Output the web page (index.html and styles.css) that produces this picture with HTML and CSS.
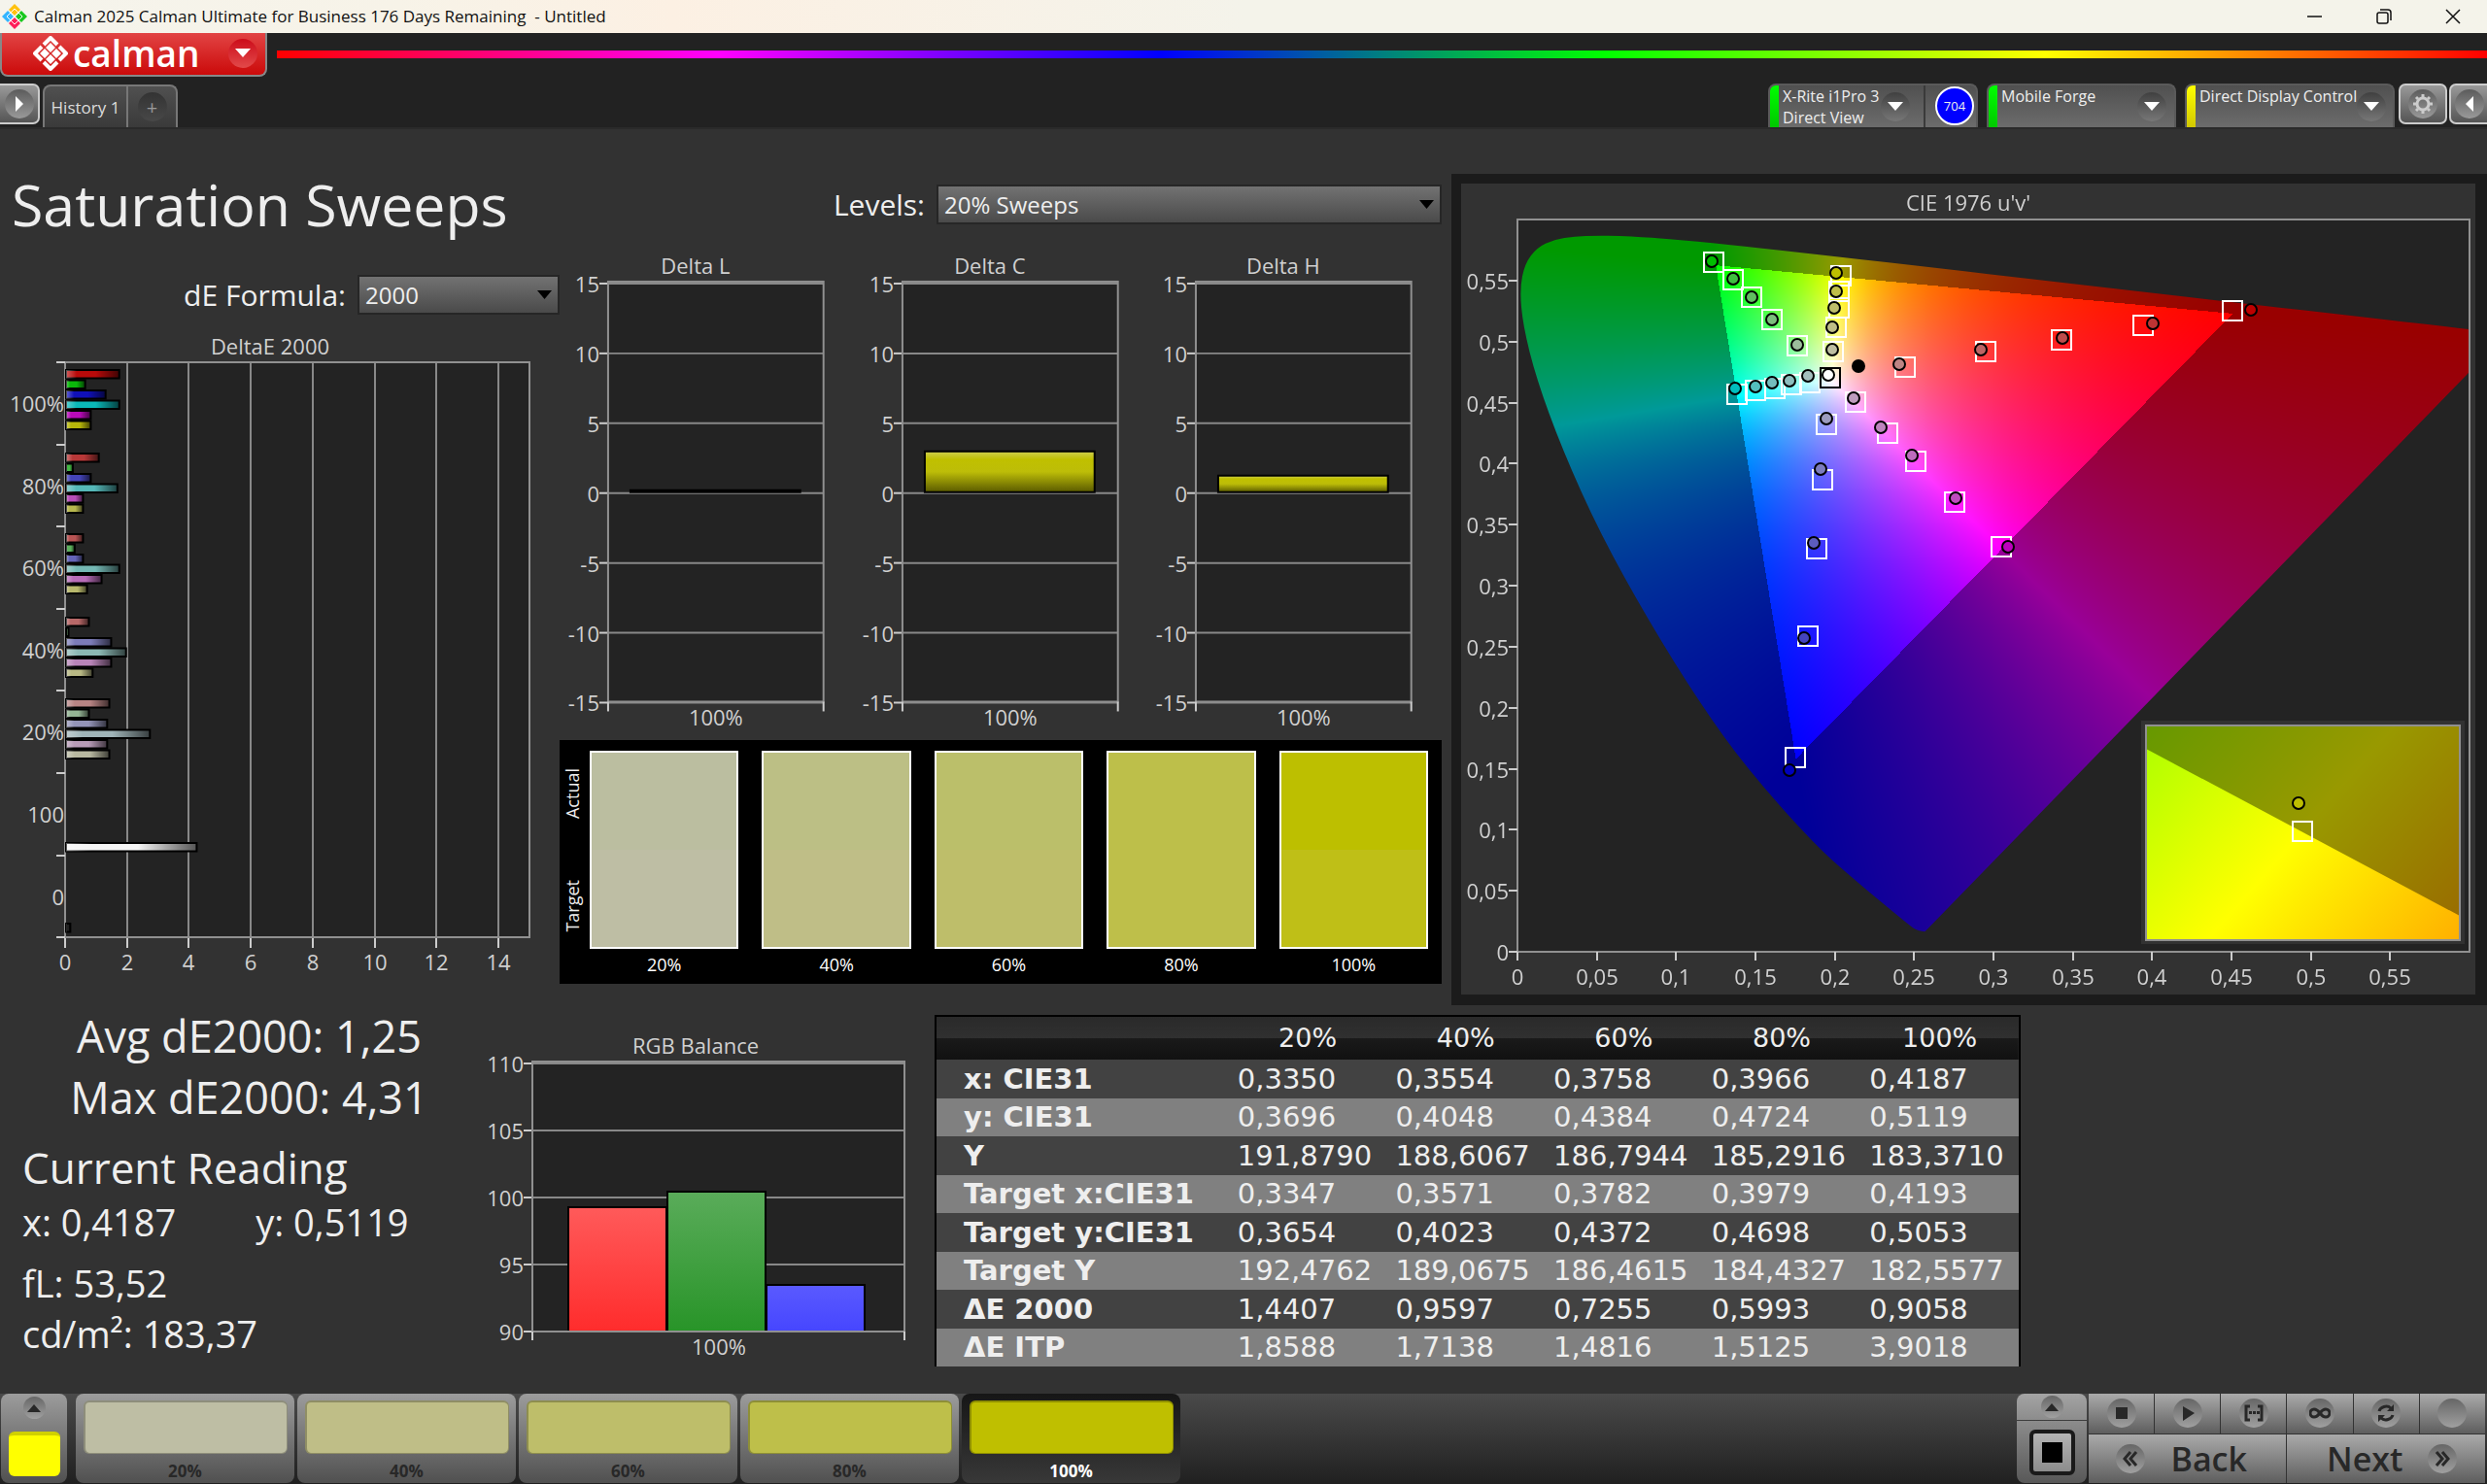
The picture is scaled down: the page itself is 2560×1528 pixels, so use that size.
FILE: index.html
```html
<!DOCTYPE html>
<html lang="en">
<head>
    <meta charset="utf-8">
    <title>Calman 2025</title>
    <meta name="viewport" content="width=device-width, initial-scale=1.0">
    <link rel="stylesheet" href="styles.css">
</head>
<body>
    <div class="titlebar">
        <svg class="app-icon" width="26" height="26" viewBox="0 0 26 26">
            <path fill="#ffc20e" d="M13 0l6 6-6 6-6-6z"/>
            <path fill="#33b5ff" d="M6 7l6 6-6 6-6-6z"/>
            <path fill="#19c81e" d="M20 7l6 6-6 6-6-6z"/>
            <path fill="#ff1f5a" d="M13 14l6 6-6 6-6-6z"/>
            <path fill="none" stroke="#fff" d="M13 5l4 4-4 4-4-4zM13 13l4 4-4 4-4-4zM9 9l4 4-4 4-4-4zM17 9l4 4-4 4-4-4z"/>
        </svg>
        <span class="app-title">Calman 2025 Calman Ultimate for Business 176 Days Remaining &nbsp;- Untitled</span>
        <div class="window-buttons">
            <button aria-label="Minimize"><svg width="16" height="16" viewBox="0 0 16 16"><path d="M0 8h15"/></svg></button>
            <button aria-label="Restore"><svg width="16" height="16" viewBox="0 0 16 16"><rect x="1" y="4" width="11" height="11" rx="2"/><path d="M4 1h8q3 0 3 3v8"/></svg></button>
            <button aria-label="Close"><svg width="16" height="16" viewBox="0 0 16 16"><path d="M1 1l14 14M15 1L1 15"/></svg></button>
        </div>
    </div>

    <header>
        <div class="brand-row">
            <button class="brand">
                <svg width="36" height="36" viewBox="0 0 36 36">
                    <g fill="none" stroke="#fff" stroke-width="4" stroke-linejoin="round">
                        <path d="M11 9l7-7 7 7M9 11l-7 7 7 7M27 11l7 7-7 7M11 27l7 7 7-7"/>
                    </g>
                    <path fill="#fff" d="M18 7l5 5-5 5-5-5zM12 13l5 5-5 5-5-5zM24 13l5 5-5 5-5-5zM18 19l5 5-5 5-5-5z"/>
                </svg>
                <span class="brand-name">calman</span>
                <span class="round red"><svg width="16" height="10" viewBox="0 0 16 10"><path d="M0 0h16l-8 9z"/></svg></span>
            </button>
            <div class="rainbow"></div>
        </div>
        <div class="tab-row">
            <button class="edge-button left" aria-label="Expand"><span class="round"><svg width="10" height="16" viewBox="0 0 10 16"><path d="M1 0l8 8-8 8z"/></svg></span></button>
            <div class="tabs">
                <button class="tab">History 1</button>
                <button class="tab-add" aria-label="Add tab"><span class="round dark">+</span></button>
            </div>
            <div class="devices">
                <div class="device meter green">
                    <span class="device-name">X-Rite i1Pro 3<br>Direct View</span>
                    <button class="round dark" aria-label="Meter options"><svg width="16" height="10" viewBox="0 0 16 10"><path d="M0 0h16l-8 9z"/></svg></button>
                    <span class="meter-count"><b>704</b></span>
                </div>
                <div class="device source green">
                    <span class="device-name">Mobile Forge</span>
                    <button class="round dark" aria-label="Source options"><svg width="16" height="10" viewBox="0 0 16 10"><path d="M0 0h16l-8 9z"/></svg></button>
                </div>
                <div class="device display yellow">
                    <span class="device-name">Direct Display Control</span>
                    <button class="round dark" aria-label="Display options"><svg width="16" height="10" viewBox="0 0 16 10"><path d="M0 0h16l-8 9z"/></svg></button>
                </div>
                <button class="edge-button gear" aria-label="Settings"><span class="round">
                    <svg width="22" height="22" viewBox="0 0 22 22">
                        <circle cx="11" cy="11" r="6" fill="none" stroke="#ccc" stroke-width="3"/>
                        <path fill="none" stroke="#ccc" stroke-width="3" d="M11 1v3M11 18v3M1 11h3M18 11h3M4 4l2 2M16 16l2 2M18 4l-2 2M6 16l-2 2"/>
                    </svg></span></button>
                <button class="edge-button right" aria-label="Collapse"><span class="round"><svg width="10" height="16" viewBox="0 0 10 16"><path d="M9 0L1 8l8 8z"/></svg></span></button>
            </div>
        </div>
    </header>

    <main>
        <div class="top">
            <section class="sweeps">
                <h1>Saturation Sweeps</h1>
                <div class="field">
                    <label for="formula">dE Formula:</label>
                    <span class="select"><select id="formula"><option>2000</option></select></span>
                </div>
                <svg id="deltae" class="chart" viewBox="0 0 576 686"></svg>
            </section>

            <section class="deltas">
                <div class="field">
                    <label for="levels">Levels:</label>
                    <span class="select wide"><select id="levels"><option>20% Sweeps</option></select></span>
                </div>
                <div class="delta-charts">
                    <svg id="delta-l" class="chart" viewBox="0 0 303 508"></svg>
                    <svg id="delta-c" class="chart" viewBox="0 0 303 508"></svg>
                    <svg id="delta-h" class="chart" viewBox="0 0 303 508"></svg>
                </div>
                <div class="compare">
                    <div class="compare-side"><span>Actual</span><span>Target</span></div>
                    <figure><div class="pair s20"></div><figcaption>20%</figcaption></figure>
                    <figure><div class="pair s40"></div><figcaption>40%</figcaption></figure>
                    <figure><div class="pair s60"></div><figcaption>60%</figcaption></figure>
                    <figure><div class="pair s80"></div><figcaption>80%</figcaption></figure>
                    <figure><div class="pair s100"></div><figcaption>100%</figcaption></figure>
                </div>
            </section>

            <section class="cie">
                <div class="cie-plot">
                    <canvas id="cie-colors" width="1044" height="835"></canvas>
                    <svg id="cie" class="chart" viewBox="0 0 1044 835"></svg>
                </div>
            </section>
        </div>

        <div class="bottom">
            <section class="stats">
                <p class="summary">Avg dE2000: 1,25</p>
                <p class="summary">Max dE2000: 4,31</p>
                <h2>Current Reading</h2>
                <p class="xy"><span>x: 0,4187</span><span>y: 0,5119</span></p>
                <p class="luminance">fL: 53,52</p>
                <p>cd/m²: 183,37</p>
            </section>
            <section class="balance">
                <svg id="rgb" class="chart" viewBox="0 0 460 345"></svg>
            </section>
            <table>
                <thead>
                    <tr><td></td><th>20%</th><th>40%</th><th>60%</th><th>80%</th><th>100%</th></tr>
                </thead>
                <tbody>
                    <tr><th>x: CIE31</th><td>0,3350</td><td>0,3554</td><td>0,3758</td><td>0,3966</td><td>0,4187</td></tr>
                    <tr><th>y: CIE31</th><td>0,3696</td><td>0,4048</td><td>0,4384</td><td>0,4724</td><td>0,5119</td></tr>
                    <tr><th>Y</th><td>191,8790</td><td>188,6067</td><td>186,7944</td><td>185,2916</td><td>183,3710</td></tr>
                    <tr><th>Target x:CIE31</th><td>0,3347</td><td>0,3571</td><td>0,3782</td><td>0,3979</td><td>0,4193</td></tr>
                    <tr><th>Target y:CIE31</th><td>0,3654</td><td>0,4023</td><td>0,4372</td><td>0,4698</td><td>0,5053</td></tr>
                    <tr><th>Target Y</th><td>192,4762</td><td>189,0675</td><td>186,4615</td><td>184,4327</td><td>182,5577</td></tr>
                    <tr><th>ΔE 2000</th><td>1,4407</td><td>0,9597</td><td>0,7255</td><td>0,5993</td><td>0,9058</td></tr>
                    <tr><th>ΔE ITP</th><td>1,8588</td><td>1,7138</td><td>1,4816</td><td>1,5125</td><td>3,9018</td></tr>
                </tbody>
            </table>
        </div>
    </main>

    <footer>
        <button class="current" aria-label="Current pattern">
            <span class="round small"><svg width="14" height="8" viewBox="0 0 14 8"><path d="M0 8l7-8 7 8z"/></svg></span>
            <span class="current-color"></span>
        </button>
        <div class="levels">
            <button class="level s20"><span class="chip"></span>20%</button>
            <button class="level s40"><span class="chip"></span>40%</button>
            <button class="level s60"><span class="chip"></span>60%</button>
            <button class="level s80"><span class="chip"></span>80%</button>
            <button class="level s100 selected"><span class="chip"></span>100%</button>
        </div>
        <div class="pattern">
            <button class="pattern-up" aria-label="Open pattern list"><span class="round small"><svg width="14" height="8" viewBox="0 0 14 8"><path d="M0 8l7-8 7 8z"/></svg></span></button>
            <button class="pattern-window" aria-label="Pattern window"><span class="window-icon"></span></button>
        </div>
        <div class="transport">
            <button aria-label="Stop"><span class="round"><svg width="14" height="14" viewBox="0 0 14 14"><path d="M1 1h12v12H1z"/></svg></span></button>
            <button aria-label="Play"><span class="round"><svg width="16" height="16" viewBox="0 0 16 16"><path d="M3 1l12 7-12 8z"/></svg></span></button>
            <button aria-label="Read series"><span class="round"><svg width="20" height="18" viewBox="0 0 20 18"><path class="line" d="M6 2H2v14h4M14 2h4v14h-4"/><path d="M5 7h3v3H5zM9 7h3v3H9zM13 7h3v3h-3z"/></svg></span></button>
            <button aria-label="Read continuously"><span class="round"><svg width="22" height="12" viewBox="0 0 22 12"><path class="line" d="M11 6C8 2 6 2 5 2a4 4 0 0 0 0 8c1 0 3 0 6-4s5-4 6-4a4 4 0 0 1 0 8c-1 0-3 0-6-4z"/></svg></span></button>
            <button aria-label="Refresh"><span class="round"><svg width="20" height="20" viewBox="0 0 20 20"><path class="line" d="M3 8c1-4 8-7 12-3M17 12c-1 4-8 7-12 3"/><path d="M18 1v7h-7zM2 19v-7h7z"/></svg></span></button>
            <button aria-label="Record"><span class="round"></span></button>
            <button class="nav back"><span class="round"><svg width="16" height="18" viewBox="0 0 16 18"><path class="line" d="M8 2L2 9l6 7M14 2L8 9l6 7"/></svg></span>Back</button>
            <button class="nav next">Next<span class="round"><svg width="16" height="18" viewBox="0 0 16 18"><path class="line" d="M2 2l6 7-6 7M8 2l6 7-6 7"/></svg></span></button>
        </div>
    </footer>

    <script src="script.js"></script>
</body>
</html>
```

FILE: styles.css
```css
* {
    box-sizing: border-box;
}
body {
    margin: 0;
    min-height: 100vh;
    display: flex;
    flex-direction: column;
    background-color: #323232;
    color: #eee;
    font-family: "Open Sans", "Noto Sans", sans-serif;
    font-size: 18px;
}
button {
    border: none;
    padding: 0;
    margin: 0;
    background: none;
    color: inherit;
    font: inherit;
    cursor: pointer;
}
h1, h2, p, figure {
    margin: 0;
    font-weight: 400;
}
svg {
    display: block;
    flex: none;
}

/* title bar */
.titlebar {
    display: flex;
    align-items: center;
    height: 34px;
    padding-left: 2px;
    background: linear-gradient(90deg, #f5f4ec 0, #f7f3e8 16%, #fcf0e3 27%, #f4f3ea 50%);
    color: #111;
}
.app-title {
    margin-left: 7px;
    font-size: 17px;
    line-height: 34px;
}
.window-buttons {
    display: flex;
    margin-left: auto;
}
.window-buttons button {
    width: 71px;
    height: 34px;
    display: flex;
    align-items: center;
    justify-content: center;
}
.window-buttons svg {
    fill: none;
    stroke: #111;
    stroke-width: 1.5;
}

/* header */
header {
    background-color: #222;
}
.brand-row {
    display: flex;
    gap: 10px;
    height: 52px;
}
.brand {
    display: flex;
    align-items: center;
    width: 275px;
    height: 45px;
    padding: 0 8px 2px 32px;
    border: 2px solid #888;
    border-top: none;
    border-radius: 0 0 8px 8px;
    background: linear-gradient(#e24444, #cb0a0a);
}
.brand-name {
    margin-left: 5px;
    font-size: 37px;
    font-weight: 600;
    line-height: 38px;
    color: #fff;
}
.rainbow {
    flex: 1;
    height: 8px;
    margin-top: 18px;
    background: linear-gradient(90deg, #f00, #f0f, #00f, #0f0, #ff0, #f00);
}
.round {
    display: flex;
    align-items: center;
    justify-content: center;
    flex: none;
    width: 30px;
    height: 30px;
    border-radius: 50%;
    background: linear-gradient(#5c5c5c, #999);
}
.round svg {
    fill: #fff;
}
.round.red {
    margin-left: auto;
    background: linear-gradient(#cc0c1a, #e24a4a);
}
.round.dark {
    background: linear-gradient(#404040, #777);
}
.round.small {
    width: 23px;
    height: 23px;
}
.tab-row {
    display: flex;
    height: 45px;
}
.edge-button {
    display: flex;
    align-items: center;
    justify-content: center;
    width: 50px;
    height: 42px;
    border: 2px solid #ccc;
    border-radius: 7px;
    background: linear-gradient(#999, #555);
}
.edge-button.left {
    width: 41px;
    border-left: none;
    border-radius: 0 7px 7px 0;
}
.edge-button.right {
    width: 39px;
    margin-left: 2px;
    border-right: none;
    border-radius: 7px 0 0 7px;
}
.tabs {
    display: flex;
    margin: 1px 0 0 3px;
    border: 2px solid #777;
    border-bottom: none;
    border-radius: 8px 8px 0 0;
    background: linear-gradient(#505050, #3a3a3a);
}
.tab {
    width: 86px;
    border-right: 2px solid #777;
    font-size: 17px;
    color: #ddd;
}
.tab-add {
    width: 49px;
    display: flex;
    align-items: center;
    justify-content: center;
}
.tab-add .round {
    background: linear-gradient(#333, #484848);
    font-size: 20px;
    color: #999;
}
.devices {
    display: flex;
    margin-left: auto;
}
.device {
    display: flex;
    height: 45px;
    margin-right: 9px;
    padding-right: 8px;
    border: 2px solid #5a5a5a;
    border-bottom: none;
    border-radius: 8px 8px 0 0;
    background: linear-gradient(#505050, #6c6c6c);
    overflow: hidden;
}
.device::before {
    content: "";
    flex: none;
    width: 9px;
    background: linear-gradient(#0f0, #00c800);
}
.device.yellow::before {
    background: linear-gradient(#ff0, #d2c800);
}
.device-name {
    flex: 1;
    padding-left: 4px;
    font-size: 16px;
    line-height: 22px;
    white-space: nowrap;
}
.device .round {
    margin-top: 7px;
}
.meter {
    width: 216px;
    padding-right: 0;
}
.source {
    width: 195px;
}
.display {
    width: 216px;
    margin-right: 4px;
}
.meter-count {
    margin-left: 14px;
    padding: 1px 2px 0 10px;
    border-left: 2px solid #3a3a3a;
}
.meter-count b {
    display: block;
    width: 40px;
    height: 40px;
    border: 2px solid #fff;
    border-radius: 50%;
    background-color: #00f;
    font-size: 13px;
    font-weight: 400;
    line-height: 36px;
    text-align: center;
}

/* workspace */
main {
    flex: 1;
    border-top: 2px solid #2a2a2a;
}
.top {
    display: grid;
    grid-template-columns: 576fr 918fr 1066fr;
}
.chart {
    width: 100%;
    height: auto;
}
.chart text {
    font-size: 22px;
    fill: #d0d0d0;
}
h1 {
    margin: 37px 0 33px 12px;
    font-size: 59px;
    line-height: 80px;
}
.field {
    display: flex;
    align-items: center;
    justify-content: flex-end;
    gap: 12px;
    height: 41px;
}
.field label {
    font-size: 30px;
}
.select {
    position: relative;
    width: 208px;
}
.select.wide {
    width: 520px;
}
.select select {
    appearance: none;
    display: block;
    width: 100%;
    height: 41px;
    padding: 0 6px;
    border: 2px solid #262626;
    border-radius: 0;
    background: linear-gradient(#727272, #4a4a4a);
    color: #eee;
    font: inherit;
    font-size: 24px;
}
.select::after {
    content: "";
    position: absolute;
    top: 16px;
    right: 8px;
    width: 15px;
    height: 9px;
    background-color: #000;
    clip-path: polygon(0 0, 100% 0, 50% 100%);
    pointer-events: none;
}
.deltas {
    padding: 57px 10px 0 0;
}
.delta-charts {
    display: grid;
    grid-template-columns: 1fr 1fr 1fr;
    padding-top: 24px;
}
.compare {
    display: flex;
    gap: 24px;
    padding: 11px 14px 0 0;
    height: 251px;
    background-color: #000;
}
.compare-side {
    display: flex;
    flex-direction: column;
    justify-content: space-between;
    align-items: center;
    width: 31px;
    height: 204px;
    margin-right: -24px;
    padding: 18px 6px 18px 0;
}
.compare-side span {
    writing-mode: vertical-rl;
    transform: rotate(180deg);
    line-height: 22px;
}
.compare figure {
    flex: 1;
    text-align: center;
}
.compare figcaption {
    line-height: 32px;
    color: #fff;
}
.pair {
    height: 204px;
    border: 2px solid #fff;
    background: linear-gradient(var(--actual) 50%, var(--target) 50%);
}
.s20 {
    --actual: #bbbea0;
    --target: #bebea4;
}
.s40 {
    --actual: #bcbf85;
    --target: #bfbe87;
}
.s60 {
    --actual: #bbbf6a;
    --target: #bebe6a;
}
.s80 {
    --actual: #bdbf4a;
    --target: #bebf4a;
}
.s100 {
    --actual: #bdbf00;
    --target: #bfbf17;
}
.cie {
    margin-top: 46px;
    padding: 10px 12px 11px 10px;
    background-color: #1b1b1b;
}
.cie-plot {
    display: grid;
    background-color: #323232;
}
.cie-plot > * {
    grid-area: 1 / 1;
    width: 100%;
    height: auto;
}

/* readings */
.bottom {
    display: grid;
    grid-template-columns: 490fr 472fr 1118fr 480fr;
    align-items: start;
}
.stats {
    padding-left: 23px;
    font-size: 38px;
    line-height: 52px;
}
.summary {
    font-size: 45px;
    line-height: 63px;
    text-align: center;
}
h2 {
    margin-top: 11px;
    font-size: 44px;
    line-height: 60px;
}
.xy {
    display: flex;
    gap: 82px;
}
.luminance {
    margin-top: 11px;
}
.balance {
    padding: 25px 12px 0 0;
}
table {
    height: 362px;
    margin-top: 10px;
    border: 2px solid #000;
    border-bottom: none;
    border-collapse: separate;
    border-spacing: 0;
    table-layout: fixed;
    font-family: "DejaVu Sans", sans-serif;
    font-size: 29px;
    line-height: 34px;
}
th, td {
    padding: 0 0 0 9px;
    text-align: left;
}
tr > :first-child {
    width: 27%;
    padding-left: 28px;
}
thead tr {
    height: 44px;
    background: linear-gradient(#2a2a2a, #303030 50%, #1a1a1a 50%, #111);
}
thead th {
    padding: 0;
    font-size: 27px;
    font-weight: 400;
    text-align: center;
}
tbody tr {
    background-color: #424242;
}
tbody tr:nth-child(even) {
    background-color: #808080;
}

/* footer */
footer {
    display: flex;
    height: 93px;
    padding: 0 2px 1px 1px;
    background: linear-gradient(#4a4a4a, #202020);
}
footer .round {
    background: linear-gradient(#666, #a0a0a0);
}
footer .round svg {
    fill: #282828;
}
footer .round .line {
    fill: none;
    stroke: #282828;
    stroke-width: 3;
}
.current {
    display: flex;
    flex-direction: column;
    align-items: center;
    gap: 13px;
    width: 68px;
    padding-top: 3px;
    border-radius: 8px;
    background: linear-gradient(#9c9c9c, #505050);
}
.current-color {
    width: 53px;
    height: 46px;
    border-top: 4px solid #d0d000;
    border-radius: 6px;
    background-color: #ff0;
}
.levels {
    display: flex;
    gap: 3px;
    margin-left: 9px;
}
.level {
    display: flex;
    flex-direction: column;
    align-items: center;
    width: 225px;
    padding-top: 7px;
    border-radius: 8px;
    background: linear-gradient(#9c9c9c, #505050);
    font-size: 17px;
    font-weight: 700;
    line-height: 22px;
    color: #282828;
}
.level.selected {
    background: linear-gradient(#161616, #383838);
    color: #fff;
}
.chip {
    width: 210px;
    height: 55px;
    margin-bottom: 7px;
    border: 2px solid rgba(0, 0, 0, 0.25);
    border-right-width: 1px;
    border-bottom-width: 1px;
    border-radius: 6px;
    background-color: var(--target);
}
.s100 .chip {
    background-color: #bfbf00;
}
.pattern {
    display: flex;
    flex-direction: column;
    gap: 1px;
    width: 72px;
    margin-left: auto;
}
.pattern-up, .pattern-window {
    display: flex;
    align-items: center;
    justify-content: center;
}
.pattern-up {
    height: 27px;
    border-radius: 8px 8px 0 0;
    background: linear-gradient(#a4a4a4, #8c8c8c);
}
.pattern-window {
    flex: 1;
    border-radius: 0 0 8px 8px;
    background: linear-gradient(#8c8c8c, #585858);
}
.window-icon {
    width: 47px;
    height: 47px;
    border: 4px solid #1a1a1a;
    border-radius: 6px;
    background: linear-gradient(#000, #000) center / 21px 21px no-repeat, linear-gradient(#b4b4b4, #8c8c8c);
}
.transport {
    display: grid;
    grid-template-columns: repeat(6, 1fr);
    gap: 1px;
    width: 408px;
    margin-left: 2px;
    background-color: #333;
}
.transport button {
    display: flex;
    align-items: center;
    justify-content: center;
    background: linear-gradient(#aaa, #5e5e5e);
}
.transport .nav {
    grid-column: span 3;
    gap: 26px;
    color: #282828;
    font-size: 34px;
    font-weight: 600;
    line-height: 40px;
}
.transport .back {
    padding-right: 12px;
}
.transport .next {
    padding-left: 12px;
}
```

FILE: script.js
```js
const SVG = 'http://www.w3.org/2000/svg';

function add(svg, name, attrs, text) {
    const el = document.createElementNS(SVG, name);
    for (const key in attrs) el.setAttribute(key, attrs[key]);
    if (text !== undefined) el.textContent = text;
    svg.appendChild(el);
    return el;
}

function line(svg, x1, y1, x2, y2, color) {
    add(svg, 'line', { x1, y1, x2, y2, stroke: color || '#888', 'stroke-width': 2 });
}

function label(svg, x, y, text, anchor) {
    add(svg, 'text', { x, y, 'text-anchor': anchor || 'middle' }, text);
}

function gradient(svg, id, attrs, stops) {
    const g = add(svg, 'linearGradient', Object.assign({ id }, attrs));
    stops.forEach(s => add(g, 'stop', { offset: s[0], 'stop-color': s[1], 'stop-opacity': s[2] === undefined ? 1 : s[2] }));
}

function plotArea(svg, x, y, w, h) {
    add(svg, 'rect', { x, y, width: w, height: h, fill: '#232323' });
}

function frame(svg, x, y, w, h) {
    add(svg, 'rect', { x, y, width: w, height: h, fill: 'none', stroke: '#909090', 'stroke-width': 2 });
}

// DeltaE 2000, one group of six bars per saturation level
const deltaE = [
    { y: 56, bars: [['#b80a0a', 1.78], ['#0ab80a', 0.68], ['#1010b8', 1.34], ['#0ab8b8', 1.78], ['#b80ab8', 0.86], ['#b8b80a', 0.86]] },
    { y: 142, bars: [['#b83838', 1.12], ['#44b844', 0.28], ['#4444b8', 0.86], ['#55b8b8', 1.72], ['#b84eb8', 0.61], ['#b8b84e', 0.61]] },
    { y: 225, bars: [['#b85454', 0.61], ['#5cb05c', 0.34], ['#6464b8', 0.61], ['#74b8b4', 1.78], ['#b86cb8', 1.21], ['#b8b86c', 0.74]] },
    { y: 311, bars: [['#b86868', 0.8], ['#7cb47c', 0.14], ['#7c7cb8', 1.52], ['#8cb8b4', 2], ['#b884b8', 1.52], ['#b8b884', 0.92]] },
    { y: 395, bars: [['#b88484', 1.46], ['#94b494', 0.8], ['#9494b8', 1.39], ['#a0b4b8', 2.77], ['#b89cb8', 1.39], ['#b8b8a0', 1.46]] },
    { y: 543, bars: [['#f4f4f4', 4.28]] },
    { y: 626, bars: [['#222222', 0.2]] }
];

function drawDeltaE() {
    const svg = document.getElementById('deltae');
    const left = 67, top = 49, bottom = 641, unit = 31.87;
    gradient(svg, 'shade-x', {}, [[0, '#fff', 0.35], [0.2, '#fff', 0], [0.55, '#000', 0], [1, '#000', 0.65]]);
    label(svg, 278, 41, 'DeltaE 2000');
    plotArea(svg, left, top, 478, bottom - top);
    for (let v = 0; v <= 14; v += 2) {
        const x = Math.round(left + v * unit);
        line(svg, x, top, x, bottom);
        line(svg, x, bottom, x, bottom + 11, '#ccc');
        label(svg, x, 675, v);
    }
    frame(svg, left, top, 478, bottom - top);
    ['100%', '80%', '60%', '40%', '20%', '100', '0', ''].forEach((name, i) => {
        const y = Math.round(top + i * 84.6);
        line(svg, 58, y, 67, y, '#ccc');
        label(svg, 66, y + 51, name, 'end');
    });
    deltaE.forEach(group => group.bars.forEach((bar, i) => {
        const box = { x: left + 1, y: group.y + 1 + i * 10.5, width: bar[1] * unit - 2, height: 8.5 };
        add(svg, 'rect', Object.assign({ fill: bar[0], stroke: '#000', 'stroke-width': 2 }, box));
        add(svg, 'rect', Object.assign({ fill: 'url(#shade-x)' }, box));
    }));
}

function drawDelta(id, title, barTop) {
    const svg = document.getElementById(id);
    gradient(svg, id + '-fill', { x2: 0, y2: 1 }, [[0, '#cfcf50'], [0.2, '#c0c000'], [0.5, '#bdbd08'], [1, '#5a5a00']]);
    label(svg, 140, 27, title);
    plotArea(svg, 50, 35, 222, 433);
    for (let i = 0; i <= 6; i++) {
        const y = 37 + i * 72;
        line(svg, 50, y, 272, y);
        line(svg, 41, y, 50, y, '#ccc');
        label(svg, 41, y + 9, 15 - i * 5, 'end');
    }
    frame(svg, 50, 35, 222, 433);
    line(svg, 50, 468, 50, 478, '#ccc');
    line(svg, 272, 468, 272, 478, '#ccc');
    add(svg, 'rect', { x: 73, y: barTop, width: 175, height: 252 - barTop, fill: barTop > 248 ? '#000' : `url(#${id}-fill)`, stroke: '#000', 'stroke-width': 2 });
    label(svg, 161, 493, '100%');
}

function drawBalance() {
    const svg = document.getElementById('rgb');
    label(svg, 226, 25, 'RGB Balance');
    plotArea(svg, 58, 33, 383, 278);
    for (let i = 0; i <= 4; i++) {
        const y = 35 + i * 69;
        line(svg, 58, y, 441, y);
        line(svg, 49, y, 58, y, '#ccc');
        label(svg, 49, y + 9, 110 - i * 5, 'end');
    }
    [[95, 183, '#ff5a5a', '#ff2c2c'], [197, 167, '#5aac5a', '#289428'], [299, 263, '#5a5aff', '#4646ff']].forEach((b, i) => {
        gradient(svg, 'rgb-' + i, { x2: 0, y2: 1 }, [[0, b[2]], [1, b[3]]]);
        add(svg, 'rect', { x: b[0], y: b[1], width: 101, height: 311 - b[1], fill: `url(#rgb-${i})`, stroke: '#000', 'stroke-width': 2 });
    });
    frame(svg, 58, 33, 383, 278);
    line(svg, 58, 311, 58, 320, '#ccc');
    line(svg, 441, 311, 441, 320, '#ccc');
    label(svg, 250, 335, '100%');
}

// CIE 1976 u'v'
const cie = { x: 58, y: 37, w: 980, h: 754, range: 0.6 };

// spectral locus, CIE 1931 x,y
const locus = [
    [.1741, .005], [.1714, .0051], [.1689, .0069], [.1644, .0109], [.1566, .0177], [.144, .0297], [.1241, .0578],
    [.1096, .0868], [.0913, .1327], [.0687, .2007], [.0454, .295], [.0235, .4127], [.0082, .5384], [.0039, .6548],
    [.0139, .7502], [.0389, .812], [.0743, .8338], [.1142, .8262], [.1547, .8059], [.1929, .7816], [.2296, .7543],
    [.3016, .6923], [.3731, .6245], [.4441, .5547], [.5125, .4866], [.5752, .4242], [.627, .3725], [.6658, .334],
    [.6915, .3083], [.719, .2809], [.7347, .2653]
];

// brightest color at the given chromaticity, dimmed outside the Rec.709 triangle
function colorAt(u, v) {
    const d = 6 * u - 16 * v + 12;
    const x = 9 * u / d, y = 4 * v / d, z = 1 - x - y;
    const rgb = [
        3.2406 * x - 1.5372 * y - 0.4986 * z,
        -0.9689 * x + 1.8758 * y + 0.0415 * z,
        0.0557 * x - 0.204 * y + 1.057 * z
    ];
    const scale = Math.min(...rgb) < 0 ? 153 : 255;
    const max = Math.max(...rgb);
    return rgb.map(c => scale * Math.max(c, 0) / max);
}

function drawCieColors() {
    const canvas = document.getElementById('cie-colors');
    const ctx = canvas.getContext('2d');
    const field = document.createElement('canvas');
    field.width = cie.w;
    field.height = cie.h;
    const fctx = field.getContext('2d');
    const image = fctx.createImageData(cie.w, cie.h);
    for (let py = 0; py < cie.h; py++) {
        for (let px = 0; px < cie.w; px++) {
            const c = colorAt((px + 0.5) / cie.w * cie.range, (1 - (py + 0.5) / cie.h) * cie.range);
            const i = (py * cie.w + px) * 4;
            image.data[i] = c[0];
            image.data[i + 1] = c[1];
            image.data[i + 2] = c[2];
            image.data[i + 3] = 255;
        }
    }
    fctx.putImageData(image, 0, 0);

    ctx.fillStyle = '#232323';
    ctx.fillRect(cie.x, cie.y, cie.w, cie.h);
    ctx.beginPath();
    const points = locus.map(([x, y]) => {
        const d = -2 * x + 12 * y + 3;
        return [cie.x + 4 * x / d / cie.range * cie.w, cie.y + (1 - 9 * y / d / cie.range) * cie.h];
    });
    ctx.moveTo(points[0][0], points[0][1]);
    for (let i = 1; i < points.length - 1; i++) {
        const [x, y] = points[i], [nx, ny] = points[i + 1];
        ctx.quadraticCurveTo(x, y, (x + nx) / 2, (y + ny) / 2);
    }
    ctx.lineTo(points[points.length - 1][0], points[points.length - 1][1]);
    ctx.closePath();
    ctx.clip();
    ctx.drawImage(field, cie.x, cie.y);
}

const targets = [
    [260, 81], [280, 99], [299, 117], [320, 140], [346, 167],
    [391, 95], [389, 111], [389, 128], [386, 148], [383, 173],
    [457, 189], [540, 173], [618, 161], [702, 146], [794, 131],
    [284, 217], [303, 213], [323, 211], [340, 207], [359, 205],
    [406, 225], [439, 257], [468, 286], [508, 328], [556, 374],
    [376, 248], [372, 305], [366, 376], [357, 466], [344, 591],
    [866, 667]
];
const readings = [
    [258, 80, '#00be00'], [280, 98, '#40be40'], [299, 117, '#60be60'], [320, 140, '#7cbe7c'], [346, 166, '#9cbe9c'],
    [386, 92, '#bebe00'], [386, 111, '#bebe4a'], [384, 128, '#bebe6a'], [382, 148, '#bebe86'], [382, 171, '#bebea2'],
    [451, 186, '#be8484'], [535, 171, '#be6464'], [619, 159, '#be4c4c'], [712, 144, '#be3434'], [813, 130, '#be0000'],
    [282, 211, '#00bebe'], [303, 209, '#54bebe'], [320, 205, '#74bebe'], [338, 203, '#8cbebe'], [357, 198, '#a4bebe'],
    [404, 221, '#be9cbe'], [432, 251, '#be84be'], [464, 280, '#be6cbe'], [509, 324, '#be4cbe'], [563, 374, '#be00be'],
    [376, 242, '#9c9cbe'], [370, 294, '#7c7cbe'], [363, 370, '#5c5cbe'], [353, 468, '#4444be'], [338, 604, '#0000be'],
    [378, 197, '#ffffff'], [409, 188, '#000000'], [862, 638, '#bebe00']
];

function drawCie() {
    const svg = document.getElementById('cie');
    const comma = n => String(+n.toFixed(2)).replace('.', ',');
    label(svg, 522, 28, "CIE 1976 u'v'");
    frame(svg, cie.x, cie.y, cie.w, cie.h);
    for (let i = 0; i < 12; i++) {
        const x = Math.round(cie.x + i * cie.w / 12);
        const y = Math.round(cie.y + cie.h - i * cie.h / 12);
        line(svg, x, 791, x, 800, '#ccc');
        label(svg, x, 825, comma(i * 0.05));
        line(svg, 49, y, 58, y, '#ccc');
        label(svg, 49, y + 9, comma(i * 0.05), 'end');
    }

    // magnified view round the selected target
    add(svg, 'rect', { x: 700, y: 553, width: 333, height: 230, fill: '#323232' });
    gradient(svg, 'yellow-zone', { gradientUnits: 'userSpaceOnUse', x1: 704, y1: 557, x2: 997, y2: 813 }, [[0, '#aaff00'], [0.5, '#ffff00'], [1, '#ffb000']]);
    add(svg, 'rect', { x: 705, y: 558, width: 323, height: 221, fill: 'url(#yellow-zone)' });
    add(svg, 'path', { d: 'M705 558H1028V754L705 582z', fill: '#000', 'fill-opacity': 0.4 });
    frame(svg, 705, 558, 323, 221);

    targets.forEach(t => add(svg, 'rect', { x: t[0] - 10, y: t[1] - 10, width: 20, height: 20, fill: 'none', stroke: '#fff', 'stroke-width': 2 }));
    add(svg, 'rect', { x: 370, y: 190, width: 20, height: 20, fill: 'none', stroke: '#000', 'stroke-width': 2 });
    readings.forEach(r => add(svg, 'circle', { cx: r[0], cy: r[1], r: 6, fill: r[2], stroke: '#000', 'stroke-width': 2 }));
}

drawDeltaE();
drawDelta('delta-l', 'Delta L', 250);
drawDelta('delta-c', 'Delta C', 210);
drawDelta('delta-h', 'Delta H', 235);
drawBalance();
drawCieColors();
drawCie();
```
